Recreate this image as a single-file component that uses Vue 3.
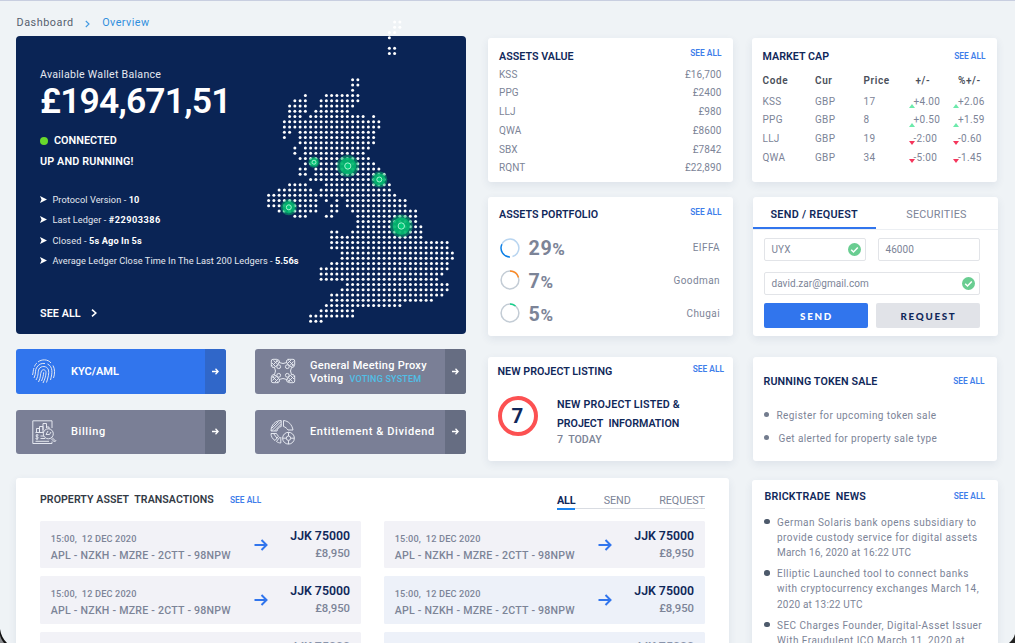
<script setup>
const STEP = 5.25
const mapRows = {
  0: [[24, 25]], 1: [[24, 25]], 2: [[23, 24]], 3: [[23, 23]], 5: [[23, 24]], 6: [[23, 24]],
  11: [[16, 17]], 12: [[16, 17]], 13: [[16, 16]], 14: [[7, 7], [11, 17]], 15: [[5, 7], [10, 17]],
  16: [[4, 7], [10, 16]], 17: [[4, 7], [9, 15]], 18: [[4, 6], [8, 18], [20, 20]], 19: [[3, 21]],
  20: [[3, 21]], 21: [[3, 4], [6, 20]], 22: [[3, 3], [6, 20]], 23: [[6, 20]], 24: [[5, 5], [7, 19]],
  25: [[5, 5], [7, 18]], 26: [[6, 19]], 27: [[7, 20]], 28: [[6, 7], [9, 21]], 29: [[6, 7], [9, 22]],
  30: [[8, 22]], 31: [[4, 7], [11, 23]], 32: [[2, 8], [10, 23]], 33: [[0, 24]],
  34: [[0, 9], [11, 11], [13, 13], [15, 26]], 35: [[0, 9], [12, 13], [15, 26]],
  36: [[2, 9], [12, 13], [16, 28]], 37: [[5, 7], [11, 12], [17, 28]], 38: [[17, 28]], 39: [[17, 29]],
  40: [[12, 13], [16, 29]], 41: [[12, 29]], 42: [[12, 34]], 43: [[12, 34]], 44: [[14, 35]],
  45: [[14, 35]], 46: [[12, 34]], 47: [[10, 34]], 48: [[10, 33]], 49: [[10, 32]], 50: [[15, 34]],
  51: [[14, 34]], 52: [[12, 33]], 53: [[12, 31]], 54: [[11, 25]], 55: [[10, 16]], 56: [[8, 16]], 57: [[8, 10]],
}
const dots = []
for (const [row, spans] of Object.entries(mapRows)) {
  for (const [from, to] of spans) {
    for (let c = from; c <= to; c++) dots.push({ x: 8.6 + c * STEP, y: 7 + row * STEP })
  }
}
const pulses = [
  { x: 54, y: 147.2, r: 5.6 }, { x: 87.8, y: 151, r: 11 }, { x: 119.3, y: 164.5, r: 8 },
  { x: 28.8, y: 192.3, r: 8 }, { x: 141.3, y: 211, r: 11.4 },
]
const facts = [
  ['Protocol Version - ', '10', 'f1'], ['Last Ledger - ', '#22903386', 'f2'], ['Closed - ', '5s Ago In 5s', 'f3'],
  ['Average Ledger Close Time In The Last 200 Ledgers - ', '5.56s', 'f4'],
]
const assets = [['KSS', '£16,700'], ['PPG', '£2400'], ['LLJ', '£980'], ['QWA', '£8600'], ['SBX', '£7842'], ['RQNT', '£22,890']]
const portfolio = [
  { pct: 29, name: 'EIFFA', kind: 'blue' }, { pct: 7, name: 'Goodman', kind: 'orange' }, { pct: 5, name: 'Chugai', kind: 'green' },
]
const market = [
  ['KSS', 'GBP', '17', '+4.00', '+2.06', 'up'], ['PPG', 'GBP', '8', '+0.50', '+1.59', 'up'],
  ['LLJ', 'GBP', '19', '-2:00', '-0.60', 'down'], ['QWA', 'GBP', '34', '-5:00', '-1.45', 'down'],
]
const transactions = ['grey', 'grey', 'grey', 'blue', 'grey', 'blue']
const news = [
  ['German Solaris bank opens subsidiary to', 'provide custody service for digital assets', 'March 16, 2020 at 16:22 UTC'],
  ['Elliptic Launched tool to connect banks', 'with cryptocurrency exchanges March 14,', '2020 at 13:22 UTC'],
  ['SEC Charges Founder, Digital-Asset Issuer', 'With Fraudulent ICO March 11, 2020 at'],
]
</script>

<template>
  <div class="page">
    <nav class="crumbs">
      <span>Dashboard</span>
      <svg class="line" width="5" height="8" viewBox="0 0 5 8"><path d="M.8 1 4 4 .8 7" /></svg>
      <span class="current">Overview</span>
    </nav>

    <div class="columns">
      <div class="wide">
        <div class="upper">
          <div class="primary">
            <section class="wallet">
              <svg class="map" width="200" height="320" viewBox="0 0 200 320">
                <circle v-for="(d, i) in dots" :key="i" :cx="d.x" :cy="d.y" r="1.5" fill="#fff" />
                <g v-for="(p, i) in pulses" :key="'p' + i">
                  <circle :cx="p.x" :cy="p.y" :r="p.r" fill="#08b36d" fill-opacity=".5" />
                  <circle :cx="p.x" :cy="p.y" :r="p.r * 0.76" fill="#02b96e" fill-opacity=".85" />
                  <circle :cx="p.x" :cy="p.y" :r="p.r * 0.2 + 0.9" fill="#00c878" stroke="#a4f5cf" stroke-width="1" />
                </g>
              </svg>
              <div class="wallet-label">Available Wallet Balance</div>
              <div class="balance">£194,671,51</div>
              <div class="status"><i></i><span>CONNECTED</span></div>
              <div class="running">UP AND RUNNING!</div>
              <ul class="facts">
                <li v-for="f in facts" :key="f[0]" :class="f[2]">
                  <svg width="7" height="7" viewBox="0 0 7 7"><path d="M0 0 7 3.5 0 7 1.5 3.5Z" fill="#fff" /></svg>
                  <span>{{ f[0] }}<b>{{ f[1] }}</b></span>
                </li>
              </ul>
              <div class="wallet-more">
                <span>SEE ALL</span>
                <svg class="line" width="6" height="8" viewBox="0 0 6 8"><path d="M1 .6 4.8 4 1 7.4" /></svg>
              </div>
            </section>

            <div class="tiles">
              <div class="tile active">
                <svg class="glyph line" width="26" height="26" viewBox="0 0 26 26">
                  <path d="M7 4C10.500 1 17 1 20 5M3.500 8.500C4 7 5 5.500 6 5M22 7.500C24 11 24 16 22.500 20M1.500 17C2.500 14 2 12 3 10M3 20C5.500 15 3.500 12 6 9 8 6 11 5 14 5.500M16.500 6C22 8.500 21.500 15 19.500 22M5 22C8 17 6.500 14 8 11 10 7.500 16 7.500 17.500 12 18.300 15 17 20 15.500 24.500M7.500 24C10 19.500 9 16 10.500 13 12 10.500 15 12 15 14.500 15 18 13.500 22 12 25M10.500 23C12 20 12.500 17 12.700 14.300" />
                </svg>
                <span class="tile-text kyc">KYC/AML</span>
                <span class="go"><svg class="line" width="7" height="7" viewBox="0 0 7 7"><path d="M0 3.500H6M3.500 .8 6.200 3.500 3.500 6.200" /></svg></span>
              </div>
              <div class="tile">
                <svg class="glyph line" width="26" height="26" viewBox="0 0 26 26">
                  <path d="M9 4.500Q13 6.500 17 4.500M9 21.500Q13 19.500 17 21.500M4.500 9.500Q6.500 13 4.500 16.500M21.500 9.500Q19.500 13 21.500 16.500" />
                  <g v-for="a in [0, 1, 2, 3]" :key="a" :transform="`rotate(${a * 90} 13 13)`">
                    <path d="M1.300 8.500V3Q1.300 1.300 3 1.300H6.500Q10 2 9.500 4L7 7.500Q4.500 10 2.500 9.500L1.300 7M2 5 5 8M3.500 2.500 7.500 6M6 1.500 8.500 4.500M2.500 7.500 7.500 2.500" />
                    <circle cx="8.700" cy="8.700" r="1.900" />
                  </g>
                </svg>
                <span class="tile-text voting">General Meeting Proxy<br>Voting <em>VOTING SYSTEM</em></span>
                <span class="go"><svg class="line" width="7" height="7" viewBox="0 0 7 7"><path d="M0 3.500H6M3.500 .8 6.200 3.500 3.500 6.200" /></svg></span>
              </div>
              <div class="tile">
                <svg class="glyph line" width="26" height="26" viewBox="0 0 26 26">
                  <path d="M21 9V1.800H1.800V24.500H21V22.500M5.500 13V9.500H8.500V13M8.500 13V7.500H12V13M12 11V4.500H15.500V9M15.500 8H18V10M4.500 13.500H12M9.500 17H13M9.500 19.500H14M7.500 16.200C5 15 4 17.500 6 17.800 8.500 18.300 7 20.800 4.500 19.500M6 15V21.200M4.500 22.300H18" />
                  <circle cx="17.300" cy="14.800" r="5" /><path d="M17 12 15 15.500H18.500L20 13M21 18.500 24.500 22M20 19.500 23.500 23 25 21.500" />
                </svg>
                <span class="tile-text billing">Billing</span>
                <span class="go"><svg class="line" width="7" height="7" viewBox="0 0 7 7"><path d="M0 3.500H6M3.500 .8 6.200 3.500 3.500 6.200" /></svg></span>
              </div>
              <div class="tile">
                <svg class="glyph line" width="26" height="26" viewBox="0 0 26 26">
                  <path d="M1 12C1 6 5.500 1.500 11.200 1.500V7.500C9 8 7.500 9.500 7 12ZM1.500 9.500 8.500 2.500M1.500 12 11 2.500M4.500 12 11.200 5.200M13.500 1.500C18.500 2 22 5.500 23 11H18C17 9.500 15.500 8 13.500 7.500ZM1 14.500H6.500C7 15.500 7.500 16.500 8.500 17.200L5 21.500C2.500 20 1 17.500 1 14.500ZM3.500 14.500 7 19.200M10.800 18V24C9 24 7.500 23.300 6.500 22.500L9.800 18.200" />
                  <circle cx="18.500" cy="19.200" r="5.900" /><circle cx="18.500" cy="19.200" r="2.200" /><path d="M18.500 13.300V17M18.500 21.400V25.100M12.600 19.200H16.300M20.700 19.200H24.400" />
                </svg>
                <span class="tile-text entitle">Entitlement &amp; Dividend</span>
                <span class="go"><svg class="line" width="7" height="7" viewBox="0 0 7 7"><path d="M0 3.500H6M3.500 .8 6.200 3.500 3.500 6.200" /></svg></span>
              </div>
            </div>
          </div>

          <div class="middle">
            <section class="card assets">
              <header><h2>ASSETS VALUE</h2><a>SEE ALL</a></header>
              <div v-for="a in assets" :key="a[0]" class="asset"><span>{{ a[0] }}</span><span>{{ a[1] }}</span></div>
            </section>

            <section class="card portfolio">
              <header><h2>ASSETS PORTFOLIO</h2><a>SEE ALL</a></header>
              <div v-for="p in portfolio" :key="p.name" class="holding">
                <svg class="line" width="20" height="20" viewBox="0 0 20 20">
                  <template v-if="p.kind === 'blue'">
                    <path d="M1.900 6.200A8.900 8.900 0 1 1 12.500 18.550" stroke="#b9d5f0" />
                    <path d="M1.900 6.200A8.900 8.900 0 0 0 10 18.900" stroke="#0b7fe6" />
                  </template>
                  <template v-else>
                    <circle cx="10" cy="10" r="8.900" stroke="#c3ccd5" />
                    <path v-if="p.kind === 'orange'" d="M10 1.100A8.900 8.900 0 0 1 18.500 7.500" stroke="#fd8a24" />
                    <path v-else d="M10 1.100A8.900 8.900 0 0 1 15.500 3" stroke="#17d28c" />
                  </template>
                </svg>
                <strong>{{ p.pct }}<small>%</small></strong>
                <span>{{ p.name }}</span>
              </div>
            </section>

            <section class="card project">
              <header><h2>NEW PROJECT LISTING</h2><a>SEE ALL</a></header>
              <div class="project-body">
                <div class="badge">7</div>
                <div class="project-text">
                  <b class="l1">NEW PROJECT LISTED &amp;</b>
                  <b class="l2">PROJECT&nbsp; INFORMATION</b>
                  <span>7&nbsp; TODAY</span>
                </div>
              </div>
            </section>
          </div>
        </div>

        <section class="card ledger">
          <div class="ledger-head">
            <h2>PROPERTY ASSET&nbsp; TRANSACTIONS</h2>
            <a>SEE ALL</a>
            <div class="filter"><b>ALL</b><span>SEND</span><span>REQUEST</span></div>
          </div>
          <div class="ledger-grid">
            <div v-for="(tone, i) in transactions" :key="i" class="entry" :class="[tone, { faded: i > 3 }]">
              <div class="entry-info">
                <span class="when">15:00,&nbsp; 12 DEC 2020</span>
                <span class="code">APL - NZKH - MZRE - 2CTT - 98NPW</span>
              </div>
              <svg class="line" width="14" height="12" viewBox="0 0 14 12"><path d="M.5 6H12.500M7.500 1 12.500 6 7.500 11" /></svg>
              <div class="amount"><b>JJK 75000</b><span>£8,950</span></div>
            </div>
          </div>
        </section>
      </div>

      <div class="side">
        <section class="card cap">
          <header><h2>MARKET CAP</h2><a>SEE ALL</a></header>
          <div class="cap-row cap-head"><span>Code</span><span>Cur</span><span>Price</span><span class="hc">+/-</span><span class="hp">%+/-</span></div>
          <div v-for="m in market" :key="m[0]" class="cap-row">
            <span>{{ m[0] }}</span><span>{{ m[1] }}</span><span>{{ m[2] }}</span>
            <span class="delta" :class="m[5]"><i></i>{{ m[3] }}</span>
            <span class="delta" :class="m[5]"><i></i>{{ m[4] }}</span>
          </div>
        </section>

        <section class="card transfer">
          <div class="tabs"><b>SEND / REQUEST</b><span>SECURITIES</span></div>
          <div class="form">
            <div class="field"><span class="uyx">UYX</span>
              <svg class="line" width="13" height="13" viewBox="0 0 13 13"><circle class="solid" cx="6.500" cy="6.500" r="6.500" /><path d="M3.200 6.700 5.500 9 9.800 4.500" /></svg>
            </div>
            <div class="field"><span>46000</span></div>
            <div class="field full"><span class="mail">david.zar@gmail.com</span>
              <svg class="line" width="13" height="13" viewBox="0 0 13 13"><circle class="solid" cx="6.500" cy="6.500" r="6.500" /><path d="M3.200 6.700 5.500 9 9.800 4.500" /></svg>
            </div>
          </div>
          <div class="actions"><button class="send">SEND</button><button>REQUEST</button></div>
        </section>

        <section class="card tokens">
          <header><h2>RUNNING TOKEN SALE</h2><a>SEE ALL</a></header>
          <ul>
            <li>Register for upcoming token sale</li>
            <li class="second">Get alerted for property sale type</li>
          </ul>
        </section>

        <section class="card news">
          <header><h2>BRICKTRADE&nbsp; NEWS</h2><a>SEE ALL</a></header>
          <ul>
            <li v-for="(n, i) in news" :key="i"><span v-for="line in n" :key="line">{{ line }}</span></li>
          </ul>
        </section>
      </div>
    </div>

    <svg class="bezel" width="7" height="14" viewBox="0 0 7 14"><path d="M0 0C1 6 3 10 7 14H0Z" fill="#111" /><path d="M0 6C.5 9 2 11 4 14H0Z" fill="#8b8d90" /></svg>
    <svg class="bezel right" width="7" height="9" viewBox="0 0 7 9"><path d="M0 0C1 4 3 6.500 6 9H0Z" fill="#222" /></svg>
  </div>
</template>

<style>
body { background: #eff3f6; overflow: hidden; }
</style>

<style scoped>
* { box-sizing: border-box; }
.page {
  position: relative; width: 1015px; height: 643px; overflow: hidden; padding: 0 17px 0 16px;
  background: #eff3f6; border-top: 1px solid #c8cee0;
  font-family: Roboto, "Liberation Sans", sans-serif; font-size: 10px; color: #7c8497;
}
h2, ul { margin: 0; padding: 0; list-style: none; }
.line path, .line circle { fill: none; }
.line .solid { fill: #69cd91; }
a { color: #3f7eea; font-size: 8.3px; font-weight: 600; line-height: 10px; letter-spacing: .05px; white-space: nowrap; }
h2 { color: #10285a; font-size: 10.7px; font-weight: 600; line-height: 14px; letter-spacing: .03px; white-space: nowrap; }
.crumbs { display: flex; align-items: center; height: 35px; padding: 8px 0 0 .5px; font-size: 10.8px; letter-spacing: .55px; color: #56606e; }
.crumbs svg { margin: 2px 12px 0 11.500px; stroke: #429ae2; stroke-width: 1.1; }
.current { color: #2f8fdd; letter-spacing: .45px; }
.columns { display: flex; }
.wide { width: 717px; margin-right: 19px; }
.upper { display: flex; justify-content: space-between; height: 442px; }
.primary { width: 449.5px; }
.wallet { position: relative; height: 297.5px; padding: 31px 24px 0; margin-top: .3px; background: #0a2455; border-radius: 4px; color: #fff; }
.map { position: absolute; left: 244px; top: -21.5px; }
.wallet-label { font-size: 10.6px; line-height: 15px; letter-spacing: .27px; color: #e4e8f0; }
.balance { margin-top: 1px; font-size: 35.5px; font-weight: 600; line-height: 36px; letter-spacing: -.85px; }
.status { display: flex; align-items: center; gap: 6px; margin-top: 14px; font-size: 10.8px; font-weight: 600; line-height: 15px; letter-spacing: .03px; }
.status i { width: 8px; height: 8px; border-radius: 50%; background: #69d92c; }
.running { margin-top: 5.500px; font-size: 10.8px; font-weight: 600; line-height: 15px; letter-spacing: .13px; }
.facts { position: relative; margin-top: 20.500px; font-size: 9.2px; letter-spacing: .07px; color: #e4e8f0; }
.facts li { display: flex; align-items: center; gap: 5.5px; height: 20.3px; white-space: pre; }
.facts .f2 b { letter-spacing: .5px; }
.facts .f3 { letter-spacing: .13px; }
.facts b { color: #fff; }
.wallet-more { display: flex; align-items: center; gap: 10px; margin-top: 35.200px; font-size: 10.8px; font-weight: 600; line-height: 15px; letter-spacing: .05px; }
.wallet-more svg { stroke: #fff; stroke-width: 1.6; }
.tiles { display: grid; grid-template-columns: 209.5px 210.5px; justify-content: space-between; row-gap: 16px; margin-top: 15.5px; }
.tile { display: flex; align-items: center; height: 44.3px; border-radius: 3px; overflow: hidden; background: #7a7f96; color: #fff; }
.tile.active { background: #3175ed; }
.glyph { margin-left: 15px; stroke: #e9ecf3; stroke-width: .95; flex: none; }
.tile-text { flex: 1; padding-top: 1px; margin-left: 14px; font-size: 11px; font-weight: 500; line-height: 13.5px; letter-spacing: .6px; white-space: nowrap; }
.kyc { padding-top: 0; letter-spacing: 0; font-weight: 600; }
.voting { padding-top: 3px; letter-spacing: .26px; }
.tile-text em { font-style: normal; font-size: 9px; margin-left: 3px; color: #50bfe6; letter-spacing: .2px; }
.go { display: flex; align-items: center; justify-content: center; width: 21px; height: 100%; background: #666d82; }
.active .go { background: #3067c9; }
.go svg { stroke: #fff; stroke-width: 1.3; }
.middle { width: 245px; margin-top: 2px; }
.card { background: #fff; border-radius: 3px; box-shadow: 0 3px 9px rgba(40, 70, 110, .09); }
.card header { display: flex; justify-content: space-between; align-items: flex-start; }
.assets { height: 143.500px; padding: 11px 11.500px 0 11px; }
.assets h2, .portfolio h2 { margin-top: .5px; }
.assets a { margin-top: -.7px; }
.assets header { height: 16.700px; }
.asset { display: flex; justify-content: space-between; height: 18.750px; line-height: 18.750px; letter-spacing: .1px; }
.portfolio { height: 138.500px; margin-top: 15.500px; padding: 10px 11.500px 0 11px; }
.portfolio header { height: 24.500px; }
.holding { display: flex; align-items: center; height: 32.750px; padding: 0 1.500px 0 1px; letter-spacing: .42px; }
.holding svg { margin-top: -.5px; }
.holding path, .holding circle { stroke-width: 1.5; }
.holding strong { margin: 2px auto 0 8.500px; font-size: 19.700px; font-weight: 700; letter-spacing: .6px; }
.holding small { font-size: 17px; }
.project { height: 104.500px; margin-top: 21px; padding: 8px 9px 0 9.500px; }
.project a { margin-top: -.5px; }
.project-body { display: flex; align-items: flex-start; margin-top: 17.500px; }
.badge { display: flex; align-items: center; justify-content: center; width: 40px; height: 40px; border: 4px solid #fc5152; border-radius: 50%; color: #10285a; font-size: 20.500px; font-weight: 700; }
.project-text { display: flex; flex-direction: column; margin-left: 19.500px; font-size: 10.700px; line-height: 18.500px; }
.project-text b { color: #10285a; font-weight: 600; letter-spacing: .2px; }
.project-text .l2 { letter-spacing: -.03px; }
.project-text span { line-height: 13.500px; font-weight: 500; letter-spacing: 0; }
.ledger { width: 713px; height: 180px; padding: 14px 24px 0; }
.ledger-head { display: flex; height: 29px; }
.ledger-head h2 { width: 174px; color: #333a45; font-size: 10.600px; line-height: 16.500px; letter-spacing: .06px; }
.ledger-head a { margin: 3px 0 0 16px; }
.filter { display: flex; justify-content: space-between; width: 148px; height: 17px; margin-left: auto; border-bottom: 1px solid #d9dce2; font-size: 10.800px; line-height: 17px; letter-spacing: -.05px; }
.filter b { height: 18px; border-bottom: 2px solid #1a84ee; color: #10285a; letter-spacing: -.2px; }
.ledger-grid { display: grid; grid-template-columns: 321px 321px; justify-content: space-between; row-gap: 8.200px; }
.entry { display: flex; align-items: center; height: 47.300px; padding: 0 11px 0 10.700px; background: #f2f2f7; border-radius: 1.500px; font-weight: 500; }
.entry.blue { background: #edf1f9; }
.entry-info { display: flex; flex-direction: column; width: 203px; padding-top: 4px; white-space: nowrap; }
.when { font-size: 9.200px; line-height: 17px; letter-spacing: .15px; }
.code { font-size: 10.600px; line-height: 17px; letter-spacing: .24px; }
.entry svg { stroke: #3175ed; stroke-width: 2; }
.amount { display: flex; flex-direction: column; flex: 1; margin-top: .7px; text-align: right; font-size: 11.300px; line-height: 17px; }
.amount b { color: #10285a; font-size: 12.300px; font-weight: 600; }
.faded b { color: #8a94ab; }
.side { width: 245px; margin-top: 2px; }
.cap { width: 245px; height: 143.500px; padding: 11.500px 11.500px 0 10.500px; }
.cap a { margin-top: 1.500px; }
.cap header { height: 21.500px; }
.cap-row { display: grid; grid-template-columns: 52.500px 48.500px 50px 44.500px 1fr; height: 18.800px; line-height: 19px; letter-spacing: .3px; white-space: nowrap; }
.cap-head { height: 20.500px; color: #4a4f5a; font-weight: 600; letter-spacing: .6px; }
.hc { margin-left: 2px; }
.delta { position: relative; }
.delta i { position: absolute; left: -5px; top: 12.500px; border: 3px solid transparent; border-top: 0; border-bottom: 4px solid #6ceaab; }
.delta.down i { border-bottom: 0; border-top: 4px solid #f5365c; top: 11.500px; }
.transfer { width: 244.500px; height: 138.500px; margin: 15.500px 0 0 1px; }
.tabs { display: flex; height: 33px; border-bottom: 1px solid #eceff3; text-align: center; font-size: 10.800px; line-height: 35px; }
.tabs b { width: 122.500px; border-bottom: 2px solid #3175ed; color: #10285a; font-weight: 600; letter-spacing: .28px; }
.tabs span { flex: 1; line-height: 35px; letter-spacing: .25px; }
.form { display: grid; grid-template-columns: 102px 102px; gap: 10.500px 12px; padding: 7.500px 0 0 10.500px; }
.field { display: flex; align-items: center; justify-content: space-between; height: 23.500px; padding: 0 4px 0 7px; border: 1px solid #e2e4e8; border-radius: 2px; letter-spacing: .05px; }
.field path { stroke: #fff; stroke-width: 1.500; }
.full { grid-column: span 2; }
.actions { display: flex; gap: 8px; padding: 8px 0 0 10.500px; }
.actions button { width: 104px; height: 25px; padding: 0 0 0 2px; border: 0; border-radius: 2px; background: #e1e3e8; color: #10285a; font: 900 9.800px Lato, sans-serif; letter-spacing: 1.700px; }
.actions .send { background: #3175ed; color: #fff; }
.tokens { height: 104.500px; margin: 21px 0 0 1px; padding: 18px 12.500px 0 10.500px; }
.tokens h2 { letter-spacing: .14px; }
.tokens a { margin-top: 1px; }
.tokens li, .news li { position: relative; }
.tokens ul { margin: 15.500px 0 0 13px; }
.tokens li { height: 23px; line-height: 23px; letter-spacing: .42px; }
.tokens .second { padding-left: 2px; letter-spacing: .38px; }
.tokens li::before, .news li::before { content: ""; position: absolute; left: -13px; top: 7.500px; width: 5.500px; height: 5.500px; border-radius: 50%; background: #737c8e; }
.news { width: 246px; height: 170px; margin-top: 18.500px; padding: 10px 13px 0 12.500px; }
.news h2 { letter-spacing: .18px; }
.news a { margin-top: 1px; }
.news ul { margin: 11px 0 0 12.500px; }
.news li { height: 51.600px; letter-spacing: .46px; }
.news li span:nth-child(3) { letter-spacing: .2px; }
.news li::before { top: 4px; background: #4d5a6b; }
.news li span { display: block; line-height: 15.300px; white-space: nowrap; }
.bezel { position: absolute; left: 0; bottom: 0; }
.bezel.right { left: auto; right: 0; transform: scaleX(-1); }
</style>
